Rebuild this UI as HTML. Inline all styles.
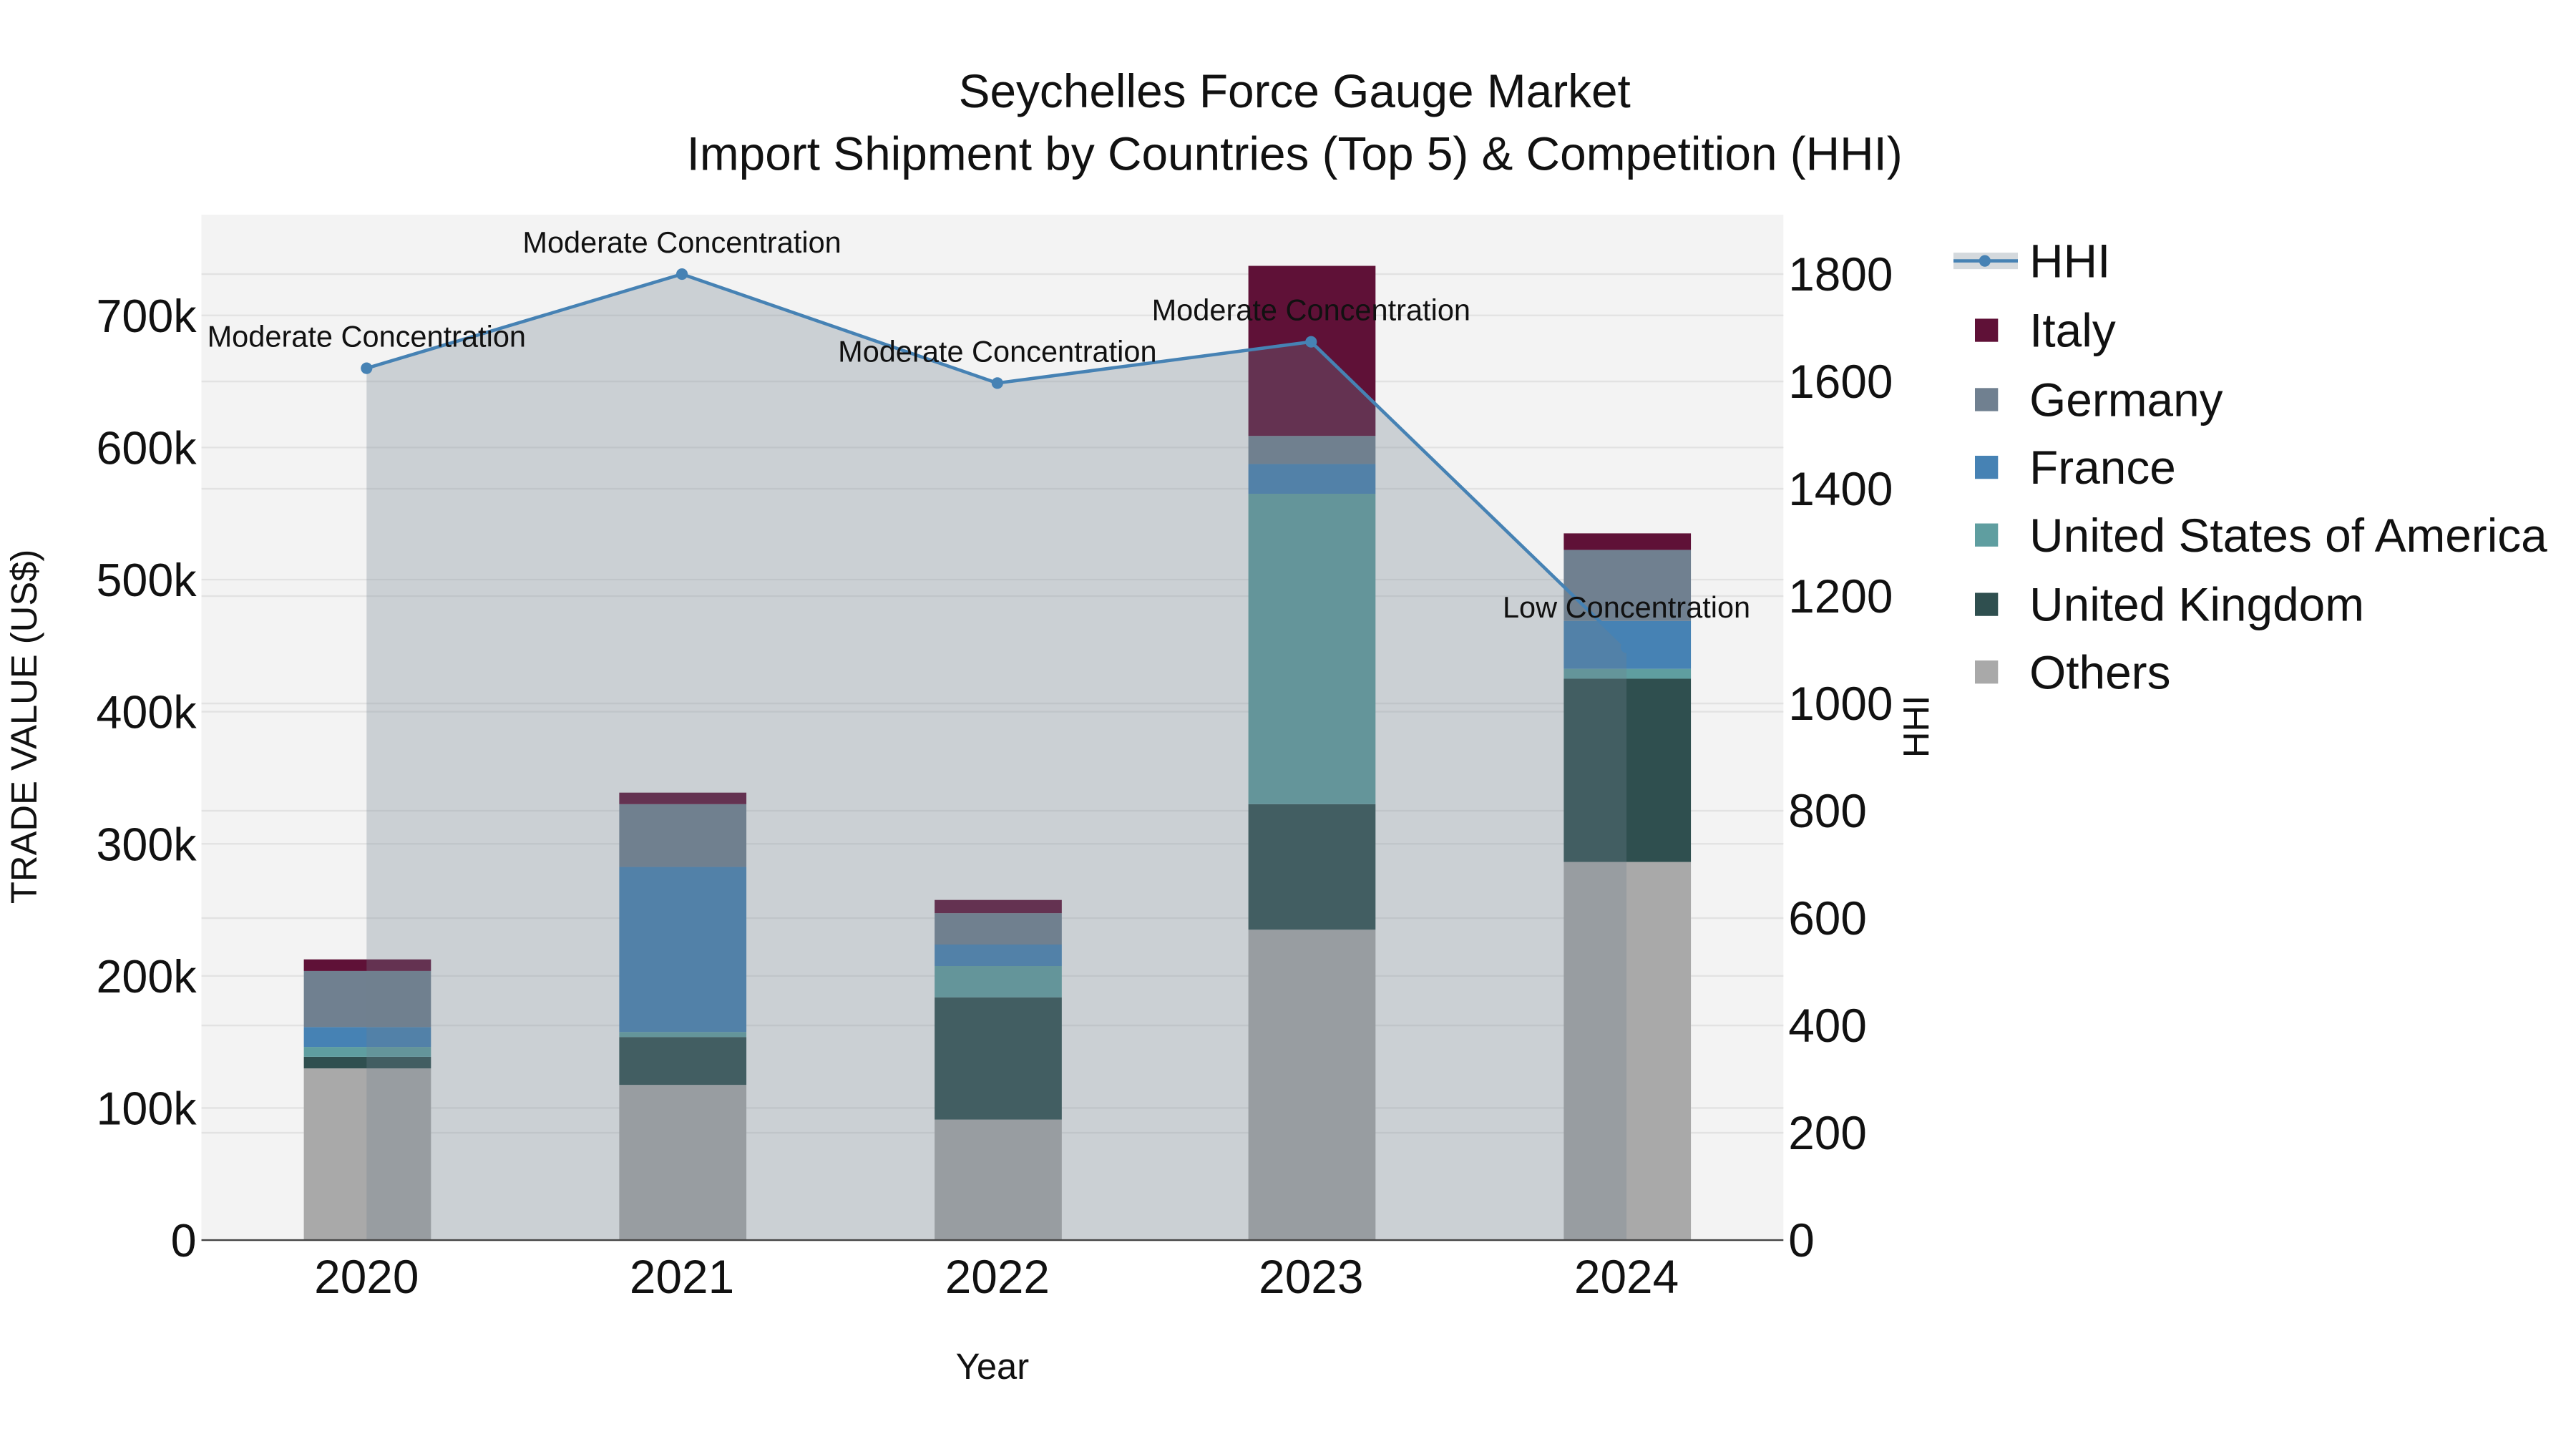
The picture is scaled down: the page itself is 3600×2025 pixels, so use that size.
<!DOCTYPE html>
<html><head><meta charset="utf-8"><style>
html,body{margin:0;padding:0;background:#fff;}
svg{display:block;}
text{font-family:"Liberation Sans",Arial,sans-serif;fill:#111;}
</style></head><body>
<svg width="3600" height="2025" viewBox="0 0 1560 877.5" xmlns="http://www.w3.org/2000/svg">
<rect x="0" y="0" width="1560" height="877.5" fill="#fff"/>
<rect x="122" y="130" width="958" height="621" fill="#f3f3f3"/>
<g stroke="#e2e2e2" stroke-width="1">
<line x1="122" x2="1080" y1="671" y2="671"/><line x1="122" x2="1080" y1="591" y2="591"/>
<line x1="122" x2="1080" y1="511" y2="511"/><line x1="122" x2="1080" y1="431" y2="431"/>
<line x1="122" x2="1080" y1="351" y2="351"/><line x1="122" x2="1080" y1="271" y2="271"/>
<line x1="122" x2="1080" y1="191" y2="191"/>
<line x1="122" x2="1080" y1="686" y2="686"/><line x1="122" x2="1080" y1="621" y2="621"/>
<line x1="122" x2="1080" y1="556" y2="556"/><line x1="122" x2="1080" y1="491" y2="491"/>
<line x1="122" x2="1080" y1="426" y2="426"/><line x1="122" x2="1080" y1="361" y2="361"/>
<line x1="122" x2="1080" y1="296" y2="296"/><line x1="122" x2="1080" y1="231" y2="231"/>
<line x1="122" x2="1080" y1="166" y2="166"/>
</g>
<g>
<rect x="184" y="647" width="77" height="104" fill="#a9a9a9"/>
<rect x="184" y="640" width="77" height="7" fill="#2f4f4f"/>
<rect x="184" y="634" width="77" height="6" fill="#5f9ea0"/>
<rect x="184" y="622" width="77" height="12" fill="#4682b4"/>
<rect x="184" y="588" width="77" height="34" fill="#708090"/>
<rect x="184" y="581" width="77" height="7" fill="#5f1137"/>
<rect x="375" y="657" width="77" height="94" fill="#a9a9a9"/>
<rect x="375" y="628" width="77" height="29" fill="#2f4f4f"/>
<rect x="375" y="625" width="77" height="3" fill="#5f9ea0"/>
<rect x="375" y="525" width="77" height="100" fill="#4682b4"/>
<rect x="375" y="487" width="77" height="38" fill="#708090"/>
<rect x="375" y="480" width="77" height="7" fill="#5f1137"/>
<rect x="566" y="678" width="77" height="73" fill="#a9a9a9"/>
<rect x="566" y="604" width="77" height="74" fill="#2f4f4f"/>
<rect x="566" y="585" width="77" height="19" fill="#5f9ea0"/>
<rect x="566" y="572" width="77" height="13" fill="#4682b4"/>
<rect x="566" y="553" width="77" height="19" fill="#708090"/>
<rect x="566" y="545" width="77" height="8" fill="#5f1137"/>
<rect x="756" y="563" width="77" height="188" fill="#a9a9a9"/>
<rect x="756" y="487" width="77" height="76" fill="#2f4f4f"/>
<rect x="756" y="299" width="77" height="188" fill="#5f9ea0"/>
<rect x="756" y="281" width="77" height="18" fill="#4682b4"/>
<rect x="756" y="264" width="77" height="17" fill="#708090"/>
<rect x="756" y="161" width="77" height="103" fill="#5f1137"/>
<rect x="947" y="522" width="77" height="229" fill="#a9a9a9"/>
<rect x="947" y="411" width="77" height="111" fill="#2f4f4f"/>
<rect x="947" y="405" width="77" height="6" fill="#5f9ea0"/>
<rect x="947" y="376" width="77" height="29" fill="#4682b4"/>
<rect x="947" y="333" width="77" height="43" fill="#708090"/>
<rect x="947" y="323" width="77" height="10" fill="#5f1137"/>
</g>
<polygon points="222,223 413,166 604,232 794,207 985,392 985,751 222,751" fill="rgba(112,128,144,0.3)"/>
<polyline points="222,223 413,166 604,232 794,207 985,392" fill="none" stroke="#4682b4" stroke-width="2"/>
<g fill="#4682b4"><circle cx="222" cy="223" r="3.5"/><circle cx="413" cy="166" r="3.5"/><circle cx="604" cy="232" r="3.5"/><circle cx="794" cy="207" r="3.5"/><circle cx="985" cy="392" r="3.5"/></g>
<line x1="122" x2="1080" y1="751" y2="751" stroke="#444" stroke-width="1"/>
<g font-size="18" text-anchor="middle">
<text x="222" y="210">Moderate Concentration</text>
<text x="413" y="153">Moderate Concentration</text>
<text x="604" y="219">Moderate Concentration</text>
<text x="794" y="194">Moderate Concentration</text>
<text x="985" y="374">Low Concentration</text>
</g>
<g font-size="28" text-anchor="end">
<text x="119" y="761">0</text><text x="119" y="681">100k</text><text x="119" y="601">200k</text>
<text x="119" y="521">300k</text><text x="119" y="441">400k</text><text x="119" y="361">500k</text>
<text x="119" y="281">600k</text><text x="119" y="201">700k</text>
</g>
<g font-size="28.5" text-anchor="start">
<text x="1083" y="761">0</text><text x="1083" y="696">200</text><text x="1083" y="631">400</text>
<text x="1083" y="566">600</text><text x="1083" y="501">800</text><text x="1083" y="436">1000</text>
<text x="1083" y="371">1200</text><text x="1083" y="306">1400</text><text x="1083" y="241">1600</text>
<text x="1083" y="176">1800</text>
</g>
<g font-size="28.5" text-anchor="middle">
<text x="222" y="783">2020</text><text x="413" y="783">2021</text><text x="604" y="783">2022</text>
<text x="794" y="783">2023</text><text x="985" y="783">2024</text>
<text x="784" y="65">Seychelles Force Gauge Market</text>
<text x="784" y="103">Import Shipment by Countries (Top 5) &amp; Competition (HHI)</text>
</g>
<text x="601" y="835" font-size="22" text-anchor="middle">Year</text>
<text transform="translate(22,440) rotate(-90)" font-size="22" text-anchor="middle">TRADE VALUE (US$)</text>
<text transform="translate(1168,440) rotate(-90)" font-size="22" text-anchor="middle">HHI</text>
<rect x="1183" y="153" width="39" height="10" fill="rgba(112,128,144,0.3)"/>
<line x1="1183" x2="1222" y1="158" y2="158" stroke="#4682b4" stroke-width="2"/>
<circle cx="1202" cy="158" r="3.5" fill="#4682b4"/>
<rect x="1196" y="193" width="14" height="14" fill="#5f1137"/>
<rect x="1196" y="235" width="14" height="14" fill="#708090"/>
<rect x="1196" y="276" width="14" height="14" fill="#4682b4"/>
<rect x="1196" y="317" width="14" height="14" fill="#5f9ea0"/>
<rect x="1196" y="359" width="14" height="14" fill="#2f4f4f"/>
<rect x="1196" y="400" width="14" height="14" fill="#a9a9a9"/>
<g font-size="28.5">
<text x="1229" y="168">HHI</text>
<text x="1229" y="210">Italy</text>
<text x="1229" y="252">Germany</text>
<text x="1229" y="293">France</text>
<text x="1229" y="334">United States of America</text>
<text x="1229" y="376">United Kingdom</text>
<text x="1229" y="417">Others</text>
</g>
</svg>
</body></html>
